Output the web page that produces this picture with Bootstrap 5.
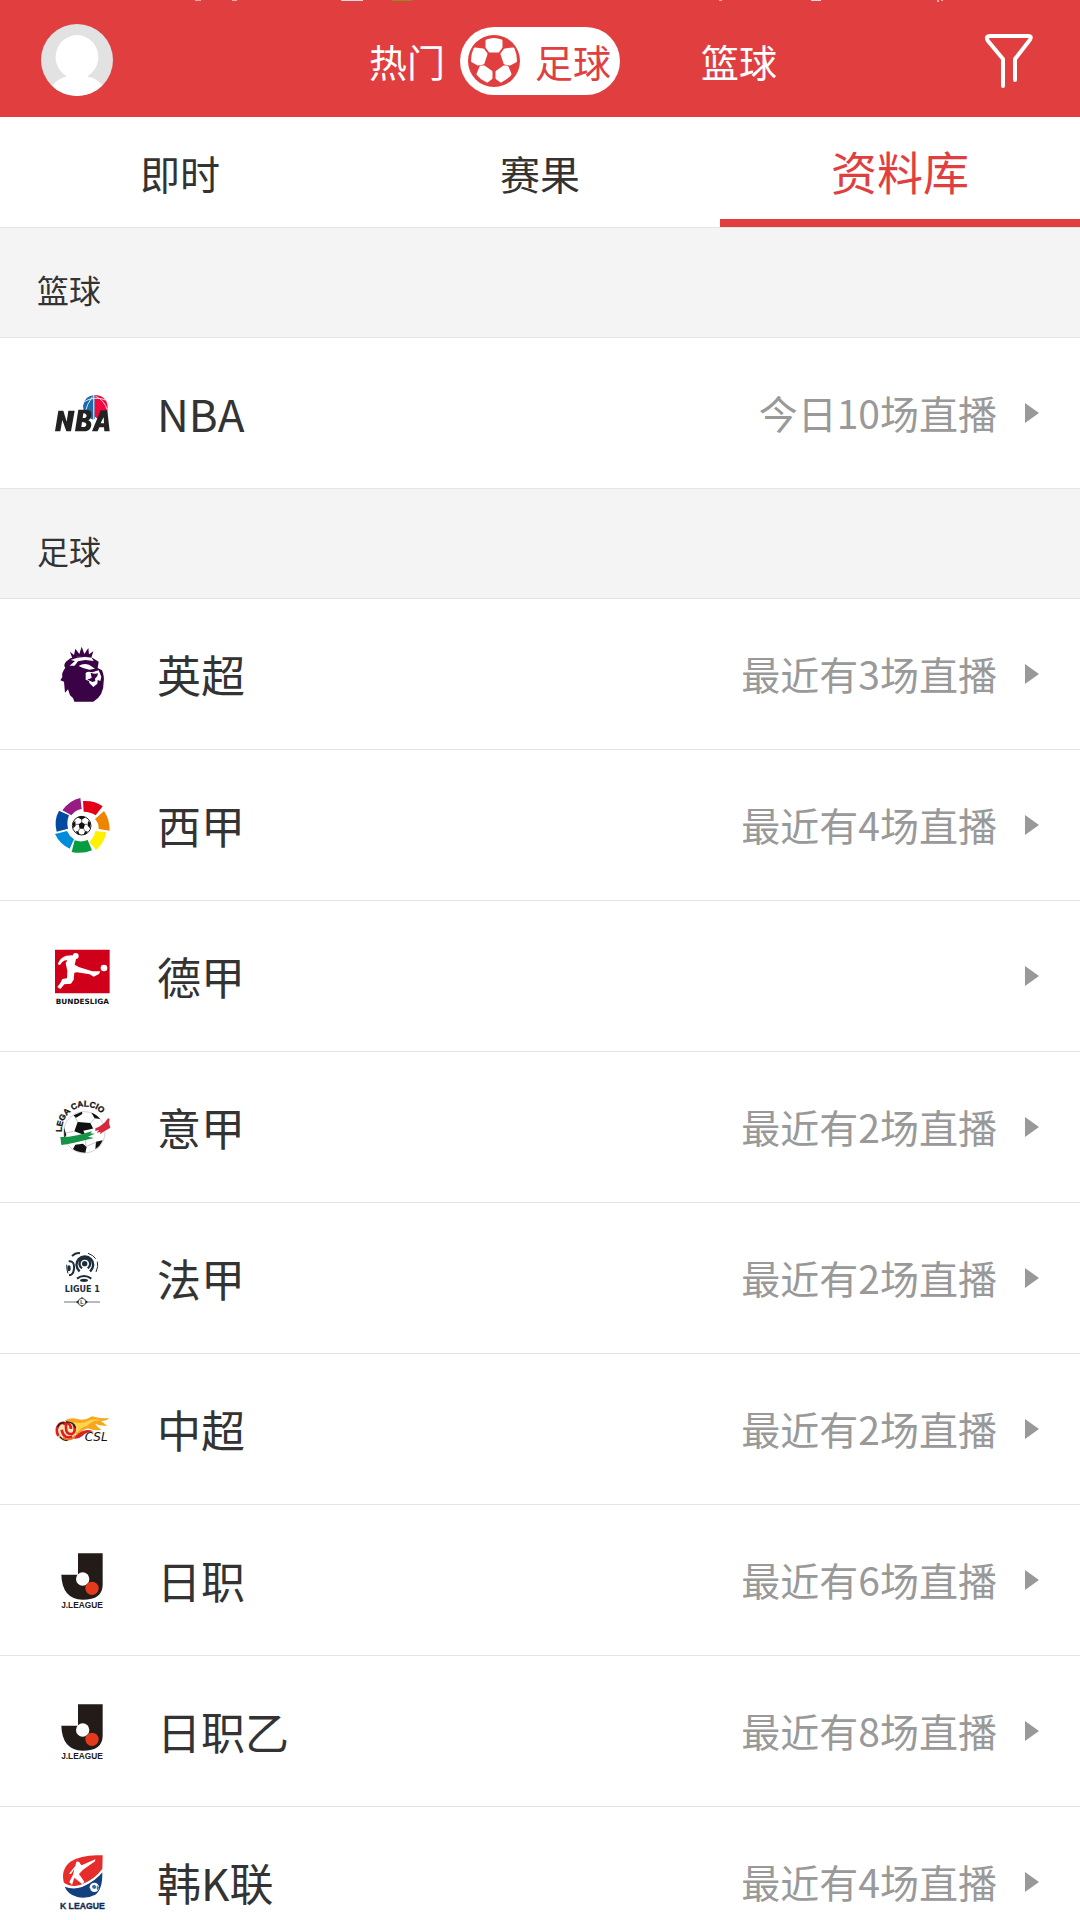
<!DOCTYPE html>
<html lang="zh-CN">
<head>
<meta charset="utf-8">
<meta name="viewport" content="width=device-width, initial-scale=1">
<title>资料库</title>
<link href="https://cdn.jsdelivr.net/npm/bootstrap@5.3.0/dist/css/bootstrap.min.css" rel="stylesheet">
<style>
  :root { --app-red: #e13e3f; --ink: #333; --muted: #999; --line: #e4e4e4; }
  body { font-family: "Noto Sans CJK SC", sans-serif; color: var(--ink); background: #fff; }
  a { color: inherit; text-decoration: none; }
  .topbar { height: 117px; padding: 3px 41px 0; background: var(--app-red); }
  .status-marks { top: 0; left: 0; }
  .avatar, .filter-btn { width: 72px; height: 72px; border: 0; padding: 0; background: none; }
  .avatar svg, .filter-btn svg { display: block; }
  .sport { width: 160px; height: 68px; padding: 0 9px 0 8px; border: 0; border-radius: 34px;
           background: none; color: #fff; font-size: 38px; line-height: 56px; }
  .sports { gap: 6px; padding-top: 2px; }
  .sport.on { background: #fff; color: var(--app-red); }
  .tabs { height: 111px; border-bottom: 1px solid var(--line); }
  .tabs a { flex: 1 1 0; font-size: 40px; border-bottom: 8px solid transparent; padding-top: 10px; }
  .tabs a.on { font-size: 46px; color: var(--app-red); border-color: var(--app-red); padding-top: 4px; }
  .scroller { min-height: 0; scrollbar-width: none; }
  .scroller::-webkit-scrollbar { display: none; }
  .group-title { height: 110px; padding: 14px 37px 0; margin: 0; background: #f4f4f4;
                 border-bottom: 1px solid var(--line); font-size: 32px; font-weight: 400; }
  .league { height: 151px; padding: 0 41px 0 54px; border-bottom: 1px solid var(--line); }
  .league .logo { width: 56px; height: 56px; margin-right: 47px; overflow: visible; }
  .league .title { font-size: 44px; line-height: 64px; }
  .league .info { font-size: 39px; line-height: 56px; padding-bottom: 2px; color: var(--muted); margin-right: 28px; }
  .league .arrow { width: 14px; height: 20px; fill: var(--muted); }
  svg text { font-family: "Liberation Sans", sans-serif; font-weight: 700; }
  svg .wide-label { font-family: "DejaVu Sans", sans-serif; }
  svg .csl-label { font-family: "DejaVu Sans", sans-serif; font-style: italic; font-weight: 400; }
</style>
<script src="https://cdn.jsdelivr.net/npm/bootstrap@5.3.0/dist/js/bootstrap.bundle.min.js"></script>
</head>
<body>
<svg width="0" height="0" class="position-absolute" aria-hidden="true">
  <symbol id="jleague" viewBox="42 50 168 168">
    <path fill="#231b18" d="M114 54H188V148Q188 193 128 193Q66 191 64 118H114Z"/>
    <circle cx="128" cy="131" r="20" fill="#fff"/><circle cx="156" cy="159" r="20" fill="#e23a1b"/>
    <text x="126" y="218" text-anchor="middle" font-size="25" fill="#231b18">J.LEAGUE</text>
  </symbol>
  <symbol id="arrow" viewBox="0 0 14 20"><path d="M0 0 14 10 0 20Z"/></symbol>
</svg>

<div class="vh-100 d-flex flex-column overflow-hidden">
  <header class="topbar position-relative d-flex align-items-center justify-content-between flex-shrink-0">
    <svg class="status-marks position-absolute" width="1080" height="2" aria-hidden="true">
      <path fill="#f0a9a9" d="M195 0h6v1h-6zM232 0h5v1h-5zM719 0h3v1h-3zM937 0h2v2h-2zM941 0h2v1h-2z"/>
      <path fill="#e8dada" d="M341 0h22v1h-22zM811 0h10v1h-10z"/><path fill="#8a8f20" d="M392 0h20v1h-20z"/>
    </svg>
    <button class="avatar" aria-label="个人中心">
      <svg width="72" height="72" viewBox="0 0 72 72"><defs><clipPath id="face"><circle cx="36" cy="36" r="36"/></clipPath></defs>
        <circle cx="36" cy="36" r="36" fill="#e2e2e2"/>
        <path clip-path="url(#face)" fill="#fff" d="M36 11a22 22 0 0 1 12 40q-3 2 1 2 7 2 12 8L60 72H12V61q5-6 12-8 3-1 0-2A22 22 0 0 1 36 11Z"/></svg>
    </button>
    <div class="sports d-flex">
      <button class="sport d-flex align-items-center justify-content-end">热门</button>
      <button class="sport on d-flex align-items-center justify-content-between">
        <svg width="52" height="52" viewBox="0 0 52 52" aria-hidden="true"><circle cx="26" cy="26" r="26" fill="#e13e3f"/>
          <g fill="#fff" stroke="#fff" stroke-width="3" stroke-linejoin="round"><path d="M19 6Q26 3 33 6L33 12 30 16H22L19 12Z"/>
          <path d="M7 14 15 15 18 19 15 28 10 29 4.500 26Q4.500 19 7 14Z"/><path d="M45 14 37 15 34 19 37 28 42 29 47.500 26Q47.500 19 45 14Z"/>
          <path d="M13 32 16 32 23 37 23 43 19 46Q13 43 10 39Z"/><path d="M39 32 36 32 29 37 29 43 33 46Q39 43 42 39Z"/></g></svg>
        足球</button>
      <button class="sport d-flex align-items-center justify-content-end">篮球</button>
    </div>
    <button class="filter-btn" aria-label="筛选">
      <svg width="72" height="72" viewBox="0 0 72 72" fill="none" stroke="#fff" stroke-width="4" stroke-linecap="round" stroke-linejoin="round"><path d="M36 62V35L21 17Q18 12 23 12H61Q66 12 62 17L48 35V56"/></svg>
    </button>
  </header>

  <nav class="tabs d-flex flex-shrink-0" aria-label="页面">
    <a href="#live" class="d-flex align-items-center justify-content-center">即时</a>
    <a href="#results" class="d-flex align-items-center justify-content-center">赛果</a>
    <a href="#library" class="on d-flex align-items-center justify-content-center" aria-current="page">资料库</a>
  </nav>

  <main class="scroller flex-grow-1 overflow-auto">
    <h2 class="group-title d-flex align-items-center">篮球</h2>
    <a href="#nba" class="league d-flex align-items-center">
      <svg class="logo" viewBox="162 165 168 168" aria-hidden="true">
        <path fill="#1b6aad" d="M284 195Q253 197 249 228 250 256 276 268L284 268Z"/><path fill="#f4063f" d="M284 195Q322 197 323 232 322 262 300 270L284 260Z"/>
        <path fill="none" stroke="#fff" stroke-width="2.500" d="M281 195V268M251 216Q282 196 321 211M277 200Q260 224 256 245M286 198Q314 212 321 238"/>
        <g fill="#222"><path d="M175 242H190L200 275 205 242H224L213 304H199L187 270 181 304H165Z"/>
        <path fill-rule="evenodd" d="M235 239H260Q277 240 274 257 272 268 265 271 277 276 273 290 269 304 250 304H225ZM250 250 248 264Q259 265 260 257 261 250 250 250ZM246 276 244 291Q258 293 259 284 259 276 246 276Z"/>
        <path fill-rule="evenodd" d="M302 241H322L329 304H313L312 292H298L293 304H276ZM311 260 302 280H312Z"/></g></svg>
      <span class="title">NBA</span><span class="info ms-auto">今日10场直播</span><svg class="arrow"><use href="#arrow"/></svg>
    </a>

    <h2 class="group-title d-flex align-items-center">足球</h2>
    <a href="#epl" class="league d-flex align-items-center">
      <svg class="logo" viewBox="42 47 168 168" aria-hidden="true">
        <path fill="#3a0346" d="M90 64 102 74 106 55 118 71 125 49 133 71 145 53 147 72 160 63 154 82Q123 72 97 84Z"/>
        <path fill="#3a0346" d="M91 84 78 94Q69 105 76 112 64 127 67 140L61 150 72 154 75 187 84 177 90 195 99 203 103 214H160Q192 195 191 154 194 140 186 120L173 113 176 94 158 83 151 80Q120 72 91 84Z"/>
        <path fill="#fff" d="M92 89Q120 76 155 82L161 92 136 89 114 93 104 106 89 106 105 92ZM116 107Q130 97 147 103L165 115 148 118 129 113ZM137 128Q143 121 157 126L176 120 184 139 181 152 173 149 172 160 160 170 148 158 147 152 137 148Z"/>
        <path fill="#3a0346" d="M151 127Q165 132 174 129L172 137 165 145 166 152 158 155 149 151 142 147 155 143Z"/>
        <path fill="#fff" d="M140 130 152 129 154 139 147 146 139 144Z"/></svg>
      <span class="title">英超</span><span class="info ms-auto">最近有3场直播</span><svg class="arrow"><use href="#arrow"/></svg>
    </a>
    <a href="#laliga" class="league d-flex align-items-center">
      <svg class="logo" viewBox="42 50 168 168" aria-hidden="true">
        <path fill="#981b83" d="M67 90Q90 59 121 53L125 86Q106 89 94 105Z"/><path fill="#e50019" d="M129 62Q164 60 188 78L167 105Q151 94 131 94Z"/>
        <path fill="#ee8500" d="M192 92Q210 119 209 151L176 146Q177 129 165 116Z"/><path fill="#fff000" d="M166 152 199 156Q193 188 168 209L148 184Q162 172 166 152Z"/>
        <path fill="#079c42" d="M104 180Q124 187 143 179L156 210Q128 222 95 215Z"/><path fill="#008bdb" d="M45 161 81 152Q88 168 102 177L89 205Q59 191 45 161Z"/>
        <path fill="#004ba0" d="M57 91 87 105Q79 125 84 145L50 154Q41 120 57 91Z"/>
        <circle cx="125" cy="136" r="28" fill="#fff" stroke="#222" stroke-width="3"/>
        <path fill="#111" d="M116 132 125 125 135 132 131 145H119ZM113 111 125 107 137 111 125 118ZM98 128 106 122 107 136 100 144ZM152 128 144 122 143 136 150 144ZM107 153 115 153 119 163 112 161ZM143 153 135 153 131 163 138 161Z"/>
        <path stroke="#222" stroke-width="2" fill="none" d="M125 117V126M107 132 117 132M143 132 134 132M119 145 114 154M131 145 136 154"/></svg>
      <span class="title">西甲</span><span class="info ms-auto">最近有4场直播</span><svg class="arrow"><use href="#arrow"/></svg>
    </a>
    <a href="#bundesliga" class="league d-flex align-items-center">
      <svg class="logo" viewBox="42 52 168 168" aria-hidden="true"><path fill="#d1001a" d="M45 57H209V188H45Z"/>
        <g fill="#fff"><circle cx="192" cy="112" r="10"/><circle cx="107" cy="76" r="9"/>
        <path d="M53 101Q60 80 79 75L97 74 108 86 104 102 116 109 157 122 181 122 177 130 161 138 149 131 111 125 103 126 101 147 93 159 73 161 61 175 52 169 61 157 67 145 81 143 82 120 77 98 82 89Q69 87 60 103Z"/></g>
        <text class="wide-label" x="127" y="219" text-anchor="middle" font-size="22" fill="#111">BUNDESLIGA</text></svg>
      <span class="title">德甲</span><svg class="arrow ms-auto"><use href="#arrow"/></svg>
    </a>
    <a href="#seriea" class="league d-flex align-items-center">
      <svg class="logo" viewBox="42 56 168 168" aria-hidden="true">
        <circle cx="133" cy="156" r="62" fill="#fff" stroke="#bbb" stroke-width="2"/>
        <path fill="#111" d="M113 125 151 128 162 149 133 164 103 153ZM101 105 126 94 127 101 107 113ZM154 97Q170 102 181 116L164 114ZM72 141 79 164 73 175ZM106 193 129 190 140 200 136 217Q111 216 99 206ZM168 184 188 180Q180 199 166 206Z"/>
        <path fill="none" stroke="#aaa" stroke-width="2" d="M113 125 105 110M151 128 166 113M101 153 78 158M135 164 138 198M140 198 170 185"/>
        <path fill="#fff" d="M130 151Q180 144 210 116L211 140Q184 158 140 174Z"/>
        <path fill="#159447" d="M61 170Q93 173 157 152L151 159 164 160 144 169 162 173 140 178Q96 190 64 194Z"/>
        <path fill="#d6283c" d="M166 144Q190 136 204 114L209 116 207 128 211 142Q196 150 179 162L182 154 170 158 177 149 166 152Z"/>
        <path id="legaArc" fill="none" d="M66 155A70 70 0 0 1 194 110"/>
        <text font-size="25" fill="#111" stroke="#111"><textPath href="#legaArc">LEGA CALCIO</textPath></text></svg>
      <span class="title">意甲</span><span class="info ms-auto">最近有2场直播</span><svg class="arrow"><use href="#arrow"/></svg>
    </a>
    <a href="#ligue1" class="league d-flex align-items-center">
      <svg class="logo" viewBox="42 58 168 168" aria-hidden="true"><g fill="none" stroke="#1c2d3b" stroke-width="7">
        <path d="M126 113A16 16 0 1 1 143 113M119 122A25 25 0 1 1 150 122"/><path stroke-width="6" d="M86 92Q104 90 102 113 101 133 87 134M96 76Q108 65 120 68M111 144Q132 128 154 144"/>
        <path stroke-width="3" d="M144 68Q160 73 167 84M172 93Q176 107 168 124M80 102Q80 119 84 128"/><path stroke-width="2" d="M72 214H180"/></g>
        <g fill="#1c2d3b"><circle cx="134" cy="99" r="8"/><ellipse cx="87" cy="113" rx="5" ry="9"/><ellipse cx="132" cy="149" rx="12" ry="5"/></g>
        <path fill="#1c2d3b" d="M108 214 126 199 144 214 126 229Z"/><circle cx="126" cy="214" r="11" fill="#fff" stroke="#1c2d3b" stroke-width="2"/><text x="121" y="220" font-size="16" fill="#1c2d3b">L</text>
        <text class="wide-label" x="127" y="184" text-anchor="middle" font-size="24" fill="#1c2d3b">LIGUE 1</text></svg>
      <span class="title">法甲</span><span class="info ms-auto">最近有2场直播</span><svg class="arrow"><use href="#arrow"/></svg>
    </a>
    <a href="#csl" class="league d-flex align-items-center">
      <svg class="logo" viewBox="42 46 168 168" aria-hidden="true">
        <path fill="#f8a71d" d="M75 104Q93 94 115 101 138 105 157 92 173 99 207 97 201 106 183 106 194 115 202 120 181 122 165 114 174 126 184 132 166 136 151 130 136 122 109 151Z"/>
        <path fill="#ffd550" d="M102 109Q126 116 145 105 157 97 184 103 157 103 140 121 124 124 111 141Z"/><path fill="#d62229" d="M106 151Q133 124 160 137 137 140 127 151 116 161 102 159Z"/>
        <circle cx="79" cy="136" r="31" fill="#ffe6ae"/><path fill="none" stroke="#d91f28" stroke-width="8" d="M55 151Q44 129 59 115 80 104 78 126 77 147 97 145 109 137 101 117M69 115Q91 105 93 130M65 132Q70 161 97 154"/>
        <path fill="none" stroke="#221b18" stroke-width="4" d="M53 124Q58 109 73 112M78 109Q99 107 107 127M59 153Q71 166 83 164"/><path fill="none" stroke="#f37021" stroke-width="5" d="M68 157Q94 169 106 149"/>
        <text class="csl-label" x="134" y="166" font-size="36" fill="#111">CSL</text></svg>
      <span class="title">中超</span><span class="info ms-auto">最近有2场直播</span><svg class="arrow"><use href="#arrow"/></svg>
    </a>
    <a href="#j1" class="league d-flex align-items-center">
      <svg class="logo" aria-hidden="true"><use href="#jleague"/></svg>
      <span class="title">日职</span><span class="info ms-auto">最近有6场直播</span><svg class="arrow"><use href="#arrow"/></svg>
    </a>
    <a href="#j2" class="league d-flex align-items-center">
      <svg class="logo" aria-hidden="true"><use href="#jleague"/></svg>
      <span class="title">日职乙</span><span class="info ms-auto">最近有8场直播</span><svg class="arrow"><use href="#arrow"/></svg>
    </a>
    <a href="#kleague" class="league d-flex align-items-center">
      <svg class="logo" viewBox="42 56 168 168" aria-hidden="true">
        <path fill="#e62d2b" d="M188 60Q127 56 91 79 61 103 72 142 92 156 119 150 165 133 187 101Z"/>
        <path fill="#12417d" d="M187 111Q167 137 126 155 99 164 74 154 83 177 112 185 138 192 166 178 188 163 187 111Z"/>
        <path fill="none" stroke="#fff" stroke-width="5" d="M71 147Q96 162 130 149 168 132 188 104"/>
        <path fill="#fff" d="M109 79Q119 76 121 86L125 90 166 72 165 78 129 103 117 116 133 139 127 147 103 127 96 149 88 140 99 118 103 101 93 116 87 115 106 92Z"/>
        <circle cx="163" cy="156" r="14" fill="#fff"/><path fill="#376caa" d="M156 151 164 148 170 155 165 161 157 159ZM149 155 153 164 158 168 151 164ZM173 149 177 157 173 165 170 161Z"/>
        <text x="127" y="221" text-anchor="middle" font-size="26" fill="#142c55" stroke="#142c55">K LEAGUE</text></svg>
      <span class="title">韩K联</span><span class="info ms-auto">最近有4场直播</span><svg class="arrow"><use href="#arrow"/></svg>
    </a>
  </main>
</div>
</body>
</html>
